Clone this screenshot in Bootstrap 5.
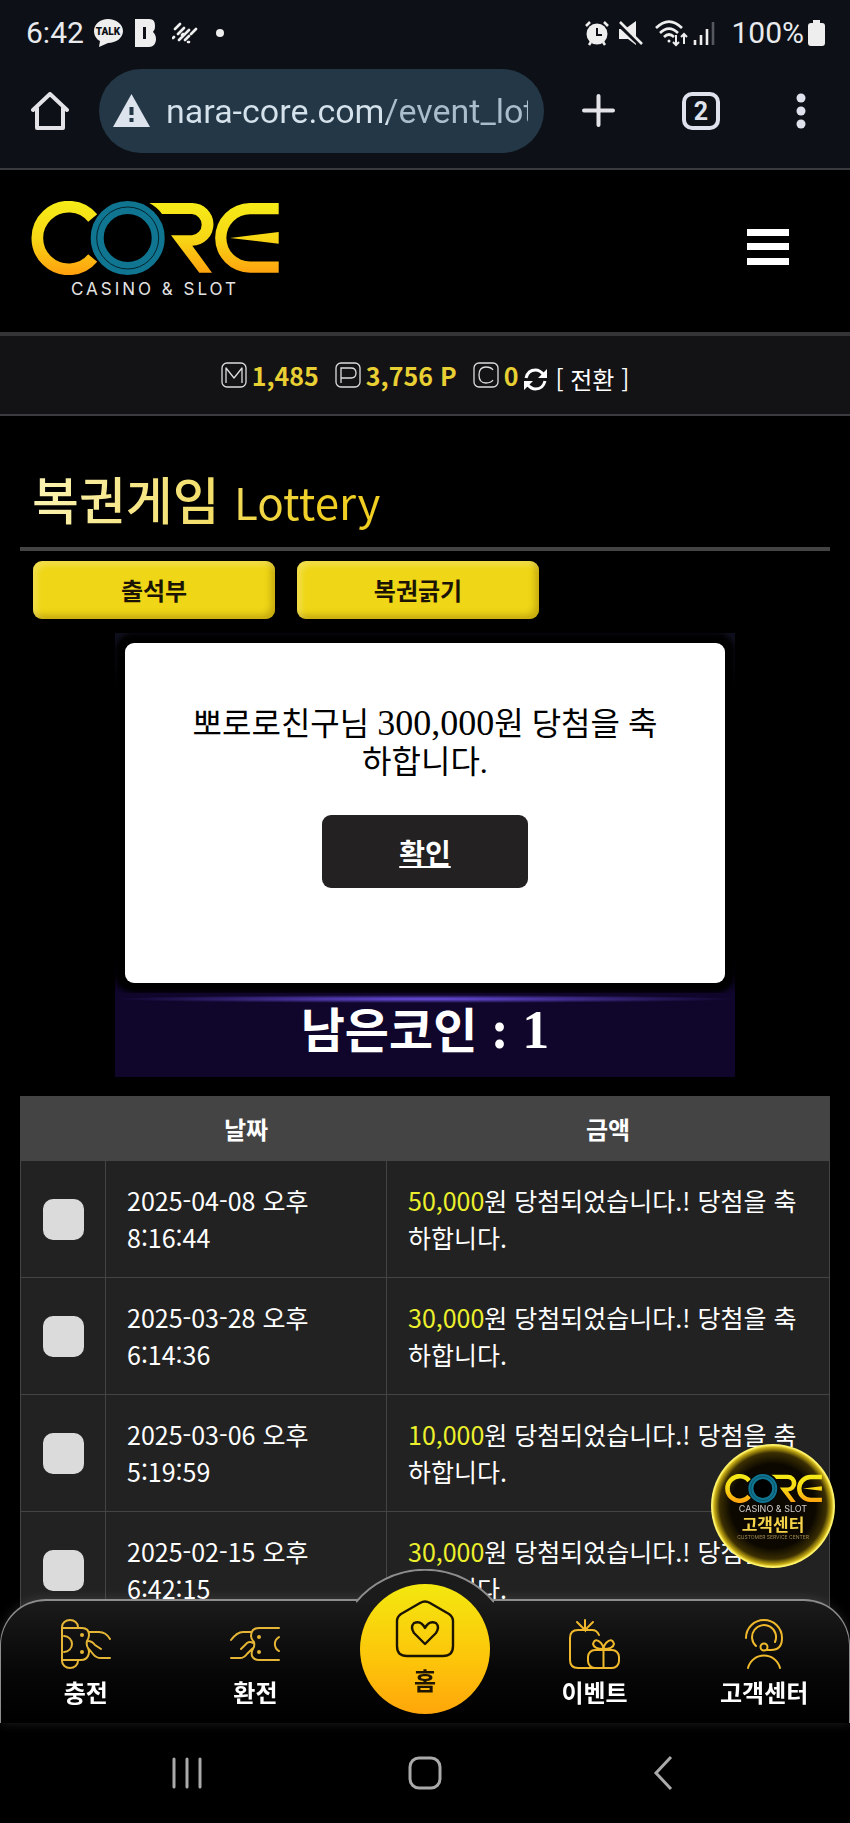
<!DOCTYPE html>
<html lang="ko">
<head>
<meta charset="utf-8">
<meta name="viewport" content="width=device-width, initial-scale=1">
<title>복권게임 Lottery</title>
<link href="https://cdn.jsdelivr.net/npm/bootstrap@5.3.0/dist/css/bootstrap.min.css" rel="stylesheet">
<style>
body{background:#000;color:#fff;font-family:"Noto Sans CJK KR",sans-serif;font-size:24px;line-height:36px}
svg{display:block;flex:none}
.plain{background:none;border:0;padding:0;color:inherit}
/* phone and browser bars */
.phone-top{background:#0d1117;color:#e8eaed;border-bottom:2px solid #3a3b3e;font-family:Roboto,sans-serif}
.status-row{height:66px;font-size:30px;padding:0 25px 0 26px}
.url-row{height:102px;padding:2px 0 15px 31px}
.url-pill{height:84px;border-radius:42px;background:#233746;padding:0 16px 0 14px;width:445px;margin-left:30px;flex:none}
.url-pill input{font-size:34px;line-height:40px;width:100%;min-width:0;outline:0;color:transparent;background:linear-gradient(90deg,#d5e2ec 0 222px,#a9bdcb 222px);-webkit-background-clip:text;background-clip:text}
.url-side{padding:0 42px 0 38px}
/* site header */
.site-head{height:162px;padding:31px 61px 0 31px}
.member-bar{height:84px;background:#131215;border-top:4px solid #343437;border-bottom:2px solid #3c3c40;gap:6px}
.member-bar b{color:#e8cf33;font-size:25px}
.member-bar .item{gap:5px;margin-right:10px}
.member-bar .item.last{margin-right:0}
.page-title{font-size:51px;line-height:74px;font-weight:500;margin:0;background:linear-gradient(100deg,#fbf3b4 0,#f3de6b 180px,#f0cf22 290px);-webkit-background-clip:text;background-clip:text;color:transparent;width:max-content}
.page-title small{font-size:44px;font-weight:400}
.title-box{border-bottom:4px solid #444;padding:45px 12px 9px}
.tab-row{gap:22px;padding:10px 13px 0}
.tab-btn{width:242px;height:58px;border:0;border-radius:9px;background:#efd616;color:#1b1405;font-weight:700;box-shadow:inset 4px 4px 6px rgba(255,255,255,.25),inset -4px -4px 6px rgba(120,90,0,.35)}
/* lottery stage and notice */
.stage{width:620px;margin:14px auto 0;background:linear-gradient(#0e0f1c 0 30px,#000 60px 320px,#10062c 360px)}
.notice{height:340px;margin:10px;background:#fff;border-radius:9px;color:#000;font-family:"Liberation Serif","Noto Sans CJK KR",serif;font-size:32px;line-height:38px;padding:62px 60px 0;box-shadow:0 0 5px 10px #000}
.notice .num{font-size:36px;line-height:1}
.coins .num{font-family:"Liberation Serif",serif;font-size:54px;line-height:1}
.ok-btn{width:206px;height:73px;border-radius:9px;background:#232122;color:#fff;font-family:"Noto Sans CJK KR",sans-serif;font-size:28px;font-weight:700;text-decoration:underline;margin-top:34px}
.coins{height:84px;font-size:48px;line-height:68px;font-weight:700;background:radial-gradient(ellipse 50% 4px at 50% 6px,#6a4ee0,transparent),#10062c}
/* history */
.log{width:100%;table-layout:fixed;border-collapse:collapse;background:#222;font-size:25px;line-height:37px;margin-top:19px}
.log th,.log td{border:1px solid #444;padding:21px}
.log th{background:#444;text-align:center;font-size:24px;padding:13px 0}
.log em{font-style:normal;color:#ecf02c}
.log input{appearance:none;width:41px;height:41px;border-radius:10px;background:#dbdbdb;display:block;margin:auto}
/* bottom bars */
.dock{height:124px;border:solid #8d8d8d;border-width:2px 1px 0;border-radius:46px 46px 0 0;background:linear-gradient(#1c1b1c,#060606 60%,#000);box-shadow:0 0 12px rgba(255,255,255,.12)}
.dock a{color:#fff;text-decoration:none;font-weight:700;flex:1 1 0;height:122px}
.dock .tab{padding-top:18px}
.dock .lbl{margin-top:5px}
.bump{left:50%;margin-left:-69px;bottom:calc(100% - 2px)}
.home-btn{top:-17px;left:50%;margin-left:-65px;width:130px;height:130px;border-radius:50%;background:linear-gradient(#f3e80f,#fdc40a 60%,#ffa60a)}
.home-btn .lbl{color:#1e1503;margin-top:4px}
.sys-nav{height:100px;background:#000;padding:0 8%}
.sys-nav .key{flex:1 1 0}
.help{right:15px;bottom:255px;width:124px;height:124px;border-radius:50%;z-index:1040;background:radial-gradient(closest-side,#0c0800 68%,#3a2e02 86%,#c9ae14 95%,#fff36a 98%);color:#f4d24a;text-decoration:none;padding-top:30px}
.help .c1{font:9px/11px Inter,sans-serif;color:#d0d0d0}
.help .c2{font-size:17px;line-height:20px;font-weight:700}
.help .c3{font:5px/7px Inter,sans-serif;color:#a08a50}
</style>
</head>
<body>
<svg width="0" height="0" class="position-absolute" aria-hidden="true">
  <defs>
    <linearGradient id="gold" gradientUnits="userSpaceOnUse" x1="0" y1="0" x2="0" y2="74"><stop offset="0" stop-color="#f5ec18"/><stop offset=".5" stop-color="#f7d715"/><stop offset="1" stop-color="#ffa00e"/></linearGradient>
    <symbol id="core" viewBox="0 0 248 74">
      <path d="M61.7 17A31.3 31.3 0 1 0 61.7 57" fill="none" stroke="url(#gold)" stroke-width="11.7"/>
      <circle cx="96.7" cy="37" r="38.5"/>
      <circle cx="96.7" cy="37" r="30.5" fill="none" stroke="#0f7591" stroke-width="13"/>
      <circle cx="96.7" cy="37" r="31" fill="none" stroke="#04222c"/>
      <path fill="url(#gold)" d="M118.3 2H161A21.3 21.3 0 0 1 161.3 44.7L181 71.7H168.3L140 34.3H161A10.7 10.7 0 0 0 161 13H131Q126 6 118.3 2ZM247.7 2H219A34.85 34.85 0 0 0 219 71.7H247.7V60.5H219A23.5 23.5 0 0 1 219 13.2H247.7ZM199 37L247.7 31V42.7Z"/>
    </symbol>
  </defs>
</svg>

<header class="phone-top">
  <div class="status-row d-flex align-items-center">
    <span>6:42</span>
    <svg class="ms-2" width="34" height="30" viewBox="0 0 34 30"><path fill="#eee" d="M16 1c8 0 15 5 15 12s-7 12-15 12L7 29l1-6C4 21 2 17 2 13 2 6 8 1 16 1z"/><text x="16" y="17" text-anchor="middle" font-family="Roboto" font-weight="900" font-size="10" fill="#0d1117">TALK</text></svg>
    <svg class="ms-2" width="22" height="30" viewBox="0 0 22 30"><path fill="#eee" d="M1 1h14c5 0 6 3 6 7s-1 4-2 6c2 2 3 4 3 7 0 5-3 8-7 8H1z"/><path fill="#0d1117" d="M9 9h3v12H9z"/></svg>
    <svg class="ms-3" width="26" height="24" viewBox="0 0 26 24" stroke="#eee" stroke-width="2.6" stroke-linecap="round" fill="none"><path d="M3 8L8 3M1 17l1-1M6 13l6-6M7 19L17 9M13 19l4-4M19 13l5-5M16 21h1M10 14l1-1"/></svg>
    <svg class="ms-2 me-auto" width="24" height="16"><circle cx="14" cy="8" r="4" fill="#eee"/></svg>
    <svg width="24" height="26" viewBox="0 0 24 26"><circle cx="12" cy="14" r="10.500" fill="#eee"/><path d="M1 6l4-4M23 6l-4-4M4 25l2-3M20 25l-2-3" stroke="#eee" stroke-width="2.500"/><path d="M12 8v7h5" fill="none" stroke="#0d1117" stroke-width="2"/></svg>
    <svg class="mx-2" width="26" height="26" viewBox="0 0 26 26"><path fill="#eee" d="M2 9h6l11-8v24l-8-6H2z"/><path d="M1 3l23 22" stroke="#0d1117" stroke-width="5"/><path d="M3 2l22 22" stroke="#eee" stroke-width="2.500"/></svg>
    <svg class="mx-1" width="34" height="28" viewBox="0 0 34 28" fill="none" stroke="#eee" stroke-width="2.600"><path d="M1 9Q14-4 27 9M5 14q9-9 18 0M9 18q5-5 10 0"/><circle cx="14" cy="22" r="1.500" fill="#eee" stroke="none"/><path stroke-width="2" d="M21 16v10m-3-3l3 3 3-3M29 25V15m-3 3l3-3 3 3"/></svg>
    <svg class="me-3" width="22" height="26" viewBox="0 0 22 26" stroke="#eee" stroke-width="2.600" fill="none"><path d="M2 20v5M8 15v10M14 9v16"/><path d="M20 2v23" stroke="#55595f"/></svg>
    <span>100%</span>
    <svg class="ms-1" width="17" height="26" viewBox="0 0 17 26"><path fill="#eee" d="M5 0h7v3h2q3 0 3 3v17q0 3-3 3H3q-3 0-3-3V6q0-3 3-3h2z"/></svg>
  </div>
  <div class="url-row d-flex align-items-center">
    <button class="plain" aria-label="홈"><svg width="38" height="38" viewBox="0 0 38 38" fill="none" stroke="#e3e3e8" stroke-width="4" stroke-linejoin="round" stroke-linecap="round"><path d="M2 18L19 2l17 16M6 16v20h26V16"/></svg></button>
    <div class="url-pill d-flex align-items-center">
      <svg class="me-3" width="37" height="33" viewBox="0 0 37 33"><path fill="#dde3ec" d="M18.500 0L37 33H0z"/><path stroke="#233746" stroke-width="4" d="M18.500 13v8M18.500 24v4"/></svg>
      <input class="plain" type="text" aria-label="주소" value="nara-core.com/event_lottery">
    </div>
    <div class="url-side d-flex align-items-center justify-content-between flex-grow-1">
      <button class="plain" aria-label="새 탭"><svg width="33" height="33" viewBox="0 0 33 33" stroke="#e3e3e8" stroke-width="4" stroke-linecap="round"><path d="M16.500 2v29M2 16.500h29"/></svg></button>
      <button class="plain me-2" aria-label="탭 2개"><svg width="38" height="38" viewBox="0 0 38 38"><rect x="2" y="2" width="34" height="34" rx="8" fill="none" stroke="#dfe1ec" stroke-width="4"/><text x="19" y="28" text-anchor="middle" font-family="Roboto" font-weight="700" font-size="25" fill="#dfe1ec">2</text></svg></button>
      <button class="plain" aria-label="메뉴"><svg width="14" height="36" viewBox="0 0 14 36" fill="#dfe1ec"><circle cx="7" cy="5" r="4.500"/><circle cx="7" cy="18" r="4.500"/><circle cx="7" cy="31" r="4.500"/></svg></button>
    </div>
  </div>
</header>

<div class="site-head d-flex justify-content-between">
  <a href="#" aria-label="CORE CASINO &amp; SLOT"><svg width="248" height="100" viewBox="0 0 248 100"><use href="#core" width="248" height="74"/><text x="124" y="94" text-anchor="middle" font-family="Inter,sans-serif" font-size="17" letter-spacing="3" fill="#e4e4e4">CASINO &amp; SLOT</text></svg></a>
  <button class="plain align-self-start mt-4" aria-label="전체 메뉴"><svg width="42" height="42" viewBox="0 0 42 42" fill="#fff"><path d="M0 4h42v7H0zM0 18h42v7H0zM0 33h42v7H0z"/></svg></button>
</div>

<div class="member-bar d-flex align-items-center justify-content-center">
  <span class="item d-flex align-items-center"><svg width="26" height="26" viewBox="0 0 26 26" fill="none" stroke="#ddd" stroke-width="1.300"><rect x="1" y="1" width="24" height="24" rx="5"/><path d="M5 21V6l8 10 8-10v15" stroke-linejoin="round"/></svg><b>1,485</b></span>
  <span class="item d-flex align-items-center"><svg width="26" height="26" viewBox="0 0 26 26" fill="none" stroke="#ddd" stroke-width="1.300"><rect x="1" y="1" width="24" height="24" rx="5"/><path d="M6 21V6h10q5 0 5 5t-5 5H6"/></svg><b>3,756 P</b></span>
  <span class="item last d-flex align-items-center"><svg width="26" height="26" viewBox="0 0 26 26" fill="none" stroke="#ddd" stroke-width="1.300"><rect x="1" y="1" width="24" height="24" rx="5"/><path d="M20 8q-2-3-7-3-7 0-7 8t7 8q5 0 7-3"/></svg><b>0</b></span>
  <button class="plain d-flex align-items-center gap-2 pt-2"><svg width="23" height="23" viewBox="0 0 23 23" fill="none" stroke="#fff" stroke-width="3"><path d="M2 10Q4 2 11.500 2 16 2 20 7M21 13q-2 8-9.500 8Q7 21 3 16"/><path fill="#fff" stroke="none" d="M23 1v9h-9zM0 22v-9h9z"/></svg><span>[ 전환 ]</span></button>
</div>

<main class="container-fluid" style="--bs-gutter-x:40px">
  <div class="title-box"><h1 class="page-title">복권게임 <small>Lottery</small></h1></div>
  <div class="tab-row d-flex">
    <button class="tab-btn">출석부</button>
    <button class="tab-btn">복권긁기</button>
  </div>

  <section class="stage d-flex flex-column">
    <div class="notice text-center" role="dialog" aria-label="당첨 알림">
      <div>뽀로로친구님 <span class="num">300,000</span>원 당첨을 축하합니다.</div>
      <button class="plain ok-btn">확인</button>
    </div>
    <div class="coins text-center">남은코인 <span class="num">: 1</span></div>
  </section>

  <table class="log mb-0">
    <colgroup><col style="width:85px"><col style="width:281px"><col></colgroup>
    <thead><tr><th aria-label="선택"></th><th>날짜</th><th>금액</th></tr></thead>
    <tbody>
      <tr><td><input type="checkbox" aria-label="2025-04-08"></td><td>2025-04-08 오후 8:16:44</td><td><em>50,000</em>원 당첨되었습니다.! 당첨을 축하합니다.</td></tr>
      <tr><td><input type="checkbox" aria-label="2025-03-28"></td><td>2025-03-28 오후 6:14:36</td><td><em>30,000</em>원 당첨되었습니다.! 당첨을 축하합니다.</td></tr>
      <tr><td><input type="checkbox" aria-label="2025-03-06"></td><td>2025-03-06 오후 5:19:59</td><td><em>10,000</em>원 당첨되었습니다.! 당첨을 축하합니다.</td></tr>
      <tr><td><input type="checkbox" aria-label="2025-02-15"></td><td>2025-02-15 오후 6:42:15</td><td><em>30,000</em>원 당첨되었습니다.! 당첨을 축하합니다.</td></tr>
    </tbody>
  </table>
</main>

<a href="#" class="help position-fixed d-flex flex-column align-items-center">
  <svg width="97" height="29" viewBox="0 0 248 74"><use href="#core" width="248" height="74"/></svg>
  <span class="c1">CASINO &amp; SLOT</span><span class="c2">고객센터</span><span class="c3">CUSTOMER SERVICE CENTER</span>
</a>

<footer class="fixed-bottom">
  <nav class="dock d-flex text-center position-relative">
    <svg class="bump position-absolute" width="138" height="34" viewBox="0 0 138 34"><path d="M1 34V32.500A90 90 0 0 1 137 32.500V34Z" fill="#1c1b1c"/><path d="M0 33A90 90 0 0 1 138 33" fill="none" stroke="#8d8d8d" stroke-width="2"/></svg>
    <a href="#" class="tab d-flex flex-column align-items-center"><svg width="50" height="50" viewBox="0 0 50 50" fill="none" stroke="#e5b535" stroke-width="2" stroke-linecap="round"><path d="M1 42V8A8 7 0 0 1 17 8M1 42A8 7 0 0 0 17 42M2 9H21Q28 9 28 16Q28 19 26 22Q25 26 27 29Q29 33 27 37Q25 41 20 41H2M3 17A8 8 0 0 1 3 33M28 13H38Q45 13 49 20M27 22Q31 22 34 26L40 30M28 30L32 35Q35 39 40 39H49"/><g fill="#e5b535" stroke="none"><circle cx="21" cy="16" r="2"/><circle cx="21" cy="33" r="2"/></g></svg><span class="lbl">충전</span></a>
    <a href="#" class="tab d-flex flex-column align-items-center"><svg width="50" height="50" viewBox="0 0 50 50" fill="none" stroke="#e5b535" stroke-width="2" stroke-linecap="round"><path d="M49 9H29Q21 9 21 17Q21 20 24 23Q25 27 23 30Q21 33 22 37Q24 41 29 41H49M49 18A8 8 0 0 0 49 32M1 21Q7 13 13 13H22M11 30L17 24Q20 22 23 24M1 39H10Q14 39 17 35L23 29"/><g fill="#e5b535" stroke="none"><circle cx="29" cy="18" r="2"/><circle cx="29" cy="33" r="2"/></g></svg><span class="lbl">환전</span></a>
    <a href="#" class="position-relative"><span class="home-btn position-absolute d-flex flex-column align-items-center pt-3"><svg width="60" height="58" viewBox="0 0 60 58" fill="none" stroke="#1b1403" stroke-width="2.400"><path d="M25 3Q30 0 35 3L54 14Q58 17 58 21V46Q58 56 48 56H12Q2 56 2 46V21Q2 17 6 14ZM30 44L19 33Q15 27 19 23Q26 20 30 28Q34 20 41 23Q45 27 41 33Z" stroke-linejoin="round"/></svg><span class="lbl">홈</span></span></a>
    <a href="#" class="tab d-flex flex-column align-items-center"><svg width="51" height="50" viewBox="0 0 51 50" fill="none" stroke="#f0b92c" stroke-width="2" stroke-linecap="round"><path d="M30 16Q28 11 23 11H9Q1 11 1 19V41Q1 49 9 49H26M16 1V11L8 3M16 11L24 3M34.500 31V48M34.500 30Q25 30 24 25Q26 18 32 24Q34 26 34.500 30Q35 26 37 24Q43 18 45 25Q44 30 34.500 30"/><rect x="19" y="31" width="31" height="18" rx="7"/></svg><span class="lbl">이벤트</span></a>
    <a href="#" class="tab d-flex flex-column align-items-center"><svg width="38" height="50" viewBox="0 0 38 50" fill="none" stroke="#f0b92c" stroke-width="2" stroke-linecap="round"><path d="M1 19C1 9 9 1 19 1S37 9 37 19Q37 31 26 31H22M11 27A12 12 0 1 1 30 23M3 49A16.500 16.500 0 0 1 35 49"/><circle cx="19" cy="28" r="3.500"/></svg><span class="lbl">고객센터</span></a>
  </nav>
  <div class="sys-nav d-flex align-items-center">
    <button class="plain key d-flex justify-content-center" aria-label="최근 앱"><svg width="32" height="34" viewBox="0 0 32 34" stroke="#aaa" stroke-width="3" stroke-linecap="round"><path d="M3 3v28M16 3v28M29 3v28"/></svg></button>
    <button class="plain key d-flex justify-content-center" aria-label="홈 화면"><svg width="34" height="34" viewBox="0 0 34 34"><rect x="2" y="2" width="30" height="30" rx="9" fill="none" stroke="#aaa" stroke-width="3"/></svg></button>
    <button class="plain key d-flex justify-content-center" aria-label="뒤로"><svg width="20" height="36" viewBox="0 0 20 36" fill="none" stroke="#aaa" stroke-width="3"><path d="M18 2L3 18l15 16"/></svg></button>
  </div>
</footer>
<script src="https://cdn.jsdelivr.net/npm/bootstrap@5.3.0/dist/js/bootstrap.bundle.min.js"></script>
</body>
</html>
